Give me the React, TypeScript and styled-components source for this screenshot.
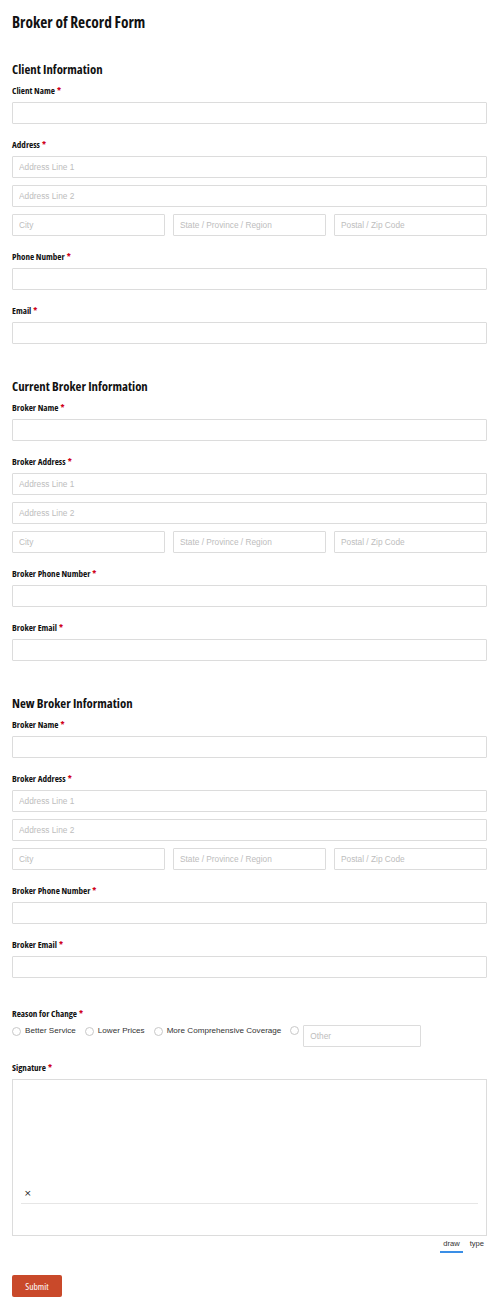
import styled, { createGlobalStyle } from "styled-components";

const GlobalStyle = createGlobalStyle`
  body {
    margin: 0;
    background: #fff;
    font-family: "Liberation Sans", Arial, sans-serif;
  }
  * {
    box-sizing: border-box;
  }
`;

const condensed = `
  font-family: "Open Sans", "DejaVu Sans", sans-serif;
  font-stretch: 75%;
  font-weight: 700;
`;

const Page = styled.form`
  padding: 12px 13px 13px 12px;
  display: flex;
  flex-direction: column;
`;

const Title = styled.h1`
  ${condensed}
  font-size: 15.4px;
  line-height: 22px;
  margin: 0 0 25px;
  color: #111;
`;

const Section = styled.section<{ $gap?: number }>`
  display: flex;
  flex-direction: column;
  margin-bottom: ${(p) => p.$gap ?? 18}px;
`;

const SectionTitle = styled.h2`
  ${condensed}
  font-size: 12.8px;
  line-height: 20px;
  margin: 0 0 5px;
  color: #111;
`;

const Field = styled.div<{ $gap?: number }>`
  display: flex;
  flex-direction: column;
  margin-bottom: ${(p) => p.$gap ?? 14}px;
`;

const Label = styled.label`
  ${condensed}
  font-size: 9.1px;
  line-height: 14px;
  color: #111;
  margin-bottom: 4px;
`;

const Required = styled.span`
  color: #d0021b;
  margin-left: 2px;
`;

const Stack = styled.div`
  display: flex;
  flex-direction: column;
  gap: 7px;
`;

const Row = styled.div`
  display: grid;
  grid-template-columns: repeat(3, 1fr);
  gap: 8px;
`;

const Input = styled.input<{ $width?: number }>`
  width: ${(p) => (p.$width ? `${p.$width}px` : "100%")};
  height: 22px;
  border: 1px solid #dcdcdc;
  border-radius: 1px;
  padding: 0 6px;
  font-family: "Liberation Sans", Arial, sans-serif;
  font-size: 8.3px;
  color: #333;
  background: #fff;
  outline: none;
  &::placeholder {
    color: #bdbdbd;
  }
`;

const Radios = styled.div`
  display: flex;
  align-items: flex-start;
`;

const RadioOption = styled.label`
  display: flex;
  align-items: center;
  gap: 4px;
  margin-right: 9px;
  height: 11px;
  font-family: "Liberation Sans", Arial, sans-serif;
  font-size: 8.1px;
  color: #333;
  white-space: nowrap;
`;

const OtherOption = styled.div`
  display: flex;
  align-items: flex-start;
  gap: 4px;
`;

const Circle = styled.span`
  width: 9px;
  height: 9px;
  border-radius: 50%;
  border: 1px solid #c8c8c8;
  background: #fff;
  flex: none;
  margin-top: 1px;
`;

const SignatureBox = styled.div`
  height: 157px;
  border: 1px solid #dcdcdc;
  display: flex;
  flex-direction: column;
  justify-content: flex-end;
  padding: 0 8px 31px 8px;
`;

const SignLine = styled.div`
  display: flex;
  align-items: flex-end;
  border-bottom: 1px solid #e6e6e6;
  height: 16px;
  padding: 0 0 5px 3px;
  font-family: "DejaVu Sans", sans-serif;
  font-size: 9px;
  line-height: 9px;
  color: #222;
`;

const Tabs = styled.div`
  display: flex;
  justify-content: flex-end;
  gap: 4px;
  padding: 3px 0 0 0;
`;

const Tab = styled.span<{ $active?: boolean }>`
  font-family: "Liberation Sans", Arial, sans-serif;
  font-size: 7.6px;
  line-height: 10px;
  color: #333;
  padding: 0 3px 2px;
  border-bottom: 2px solid ${(p) => (p.$active ? "#3a8ee6" : "transparent")};
`;

const Submit = styled.button`
  ${condensed}
  font-weight: 400;
  align-self: flex-start;
  width: 50px;
  height: 22px;
  margin-top: 8px;
  border: none;
  border-radius: 2px;
  background: #c9492a;
  color: #fff;
  font-size: 9.5px;
  cursor: pointer;
`;

function TextField({ label }: { label: string }) {
  return (
    <Field>
      <Label>
        {label}
        <Required>*</Required>
      </Label>
      <Input type="text" />
    </Field>
  );
}

function AddressField({ label }: { label: string }) {
  return (
    <Field>
      <Label>
        {label}
        <Required>*</Required>
      </Label>
      <Stack>
        <Input placeholder="Address Line 1" />
        <Input placeholder="Address Line 2" />
        <Row>
          <Input placeholder="City" />
          <Input placeholder="State / Province / Region" />
          <Input placeholder="Postal / Zip Code" />
        </Row>
      </Stack>
    </Field>
  );
}

const reasons = ["Better Service", "Lower Prices", "More Comprehensive Coverage"];

export default function App() {
  return (
    <>
      <GlobalStyle />
      <Page onSubmit={(e) => e.preventDefault()}>
        <Title>Broker of Record Form</Title>

        <Section>
          <SectionTitle>Client Information</SectionTitle>
          <TextField label="Client Name" />
          <AddressField label="Address" />
          <TextField label="Phone Number" />
          <TextField label="Email" />
        </Section>

        <Section>
          <SectionTitle>Current Broker Information</SectionTitle>
          <TextField label="Broker Name" />
          <AddressField label="Broker Address" />
          <TextField label="Broker Phone Number" />
          <TextField label="Broker Email" />
        </Section>

        <Section $gap={15}>
          <SectionTitle>New Broker Information</SectionTitle>
          <TextField label="Broker Name" />
          <AddressField label="Broker Address" />
          <TextField label="Broker Phone Number" />
          <TextField label="Broker Email" />
        </Section>

        <Field>
          <Label>
            Reason for Change<Required>*</Required>
          </Label>
          <Radios>
            {reasons.map((r) => (
              <RadioOption key={r}>
                <Circle />
                {r}
              </RadioOption>
            ))}
            <OtherOption>
              <Circle />
              <Input $width={118} placeholder="Other" />
            </OtherOption>
          </Radios>
        </Field>

        <Field>
          <Label>
            Signature<Required>*</Required>
          </Label>
          <SignatureBox>
            <SignLine>×</SignLine>
          </SignatureBox>
          <Tabs>
            <Tab $active>draw</Tab>
            <Tab>type</Tab>
          </Tabs>
        </Field>

        <Submit type="submit">Submit</Submit>
      </Page>
    </>
  );
}
